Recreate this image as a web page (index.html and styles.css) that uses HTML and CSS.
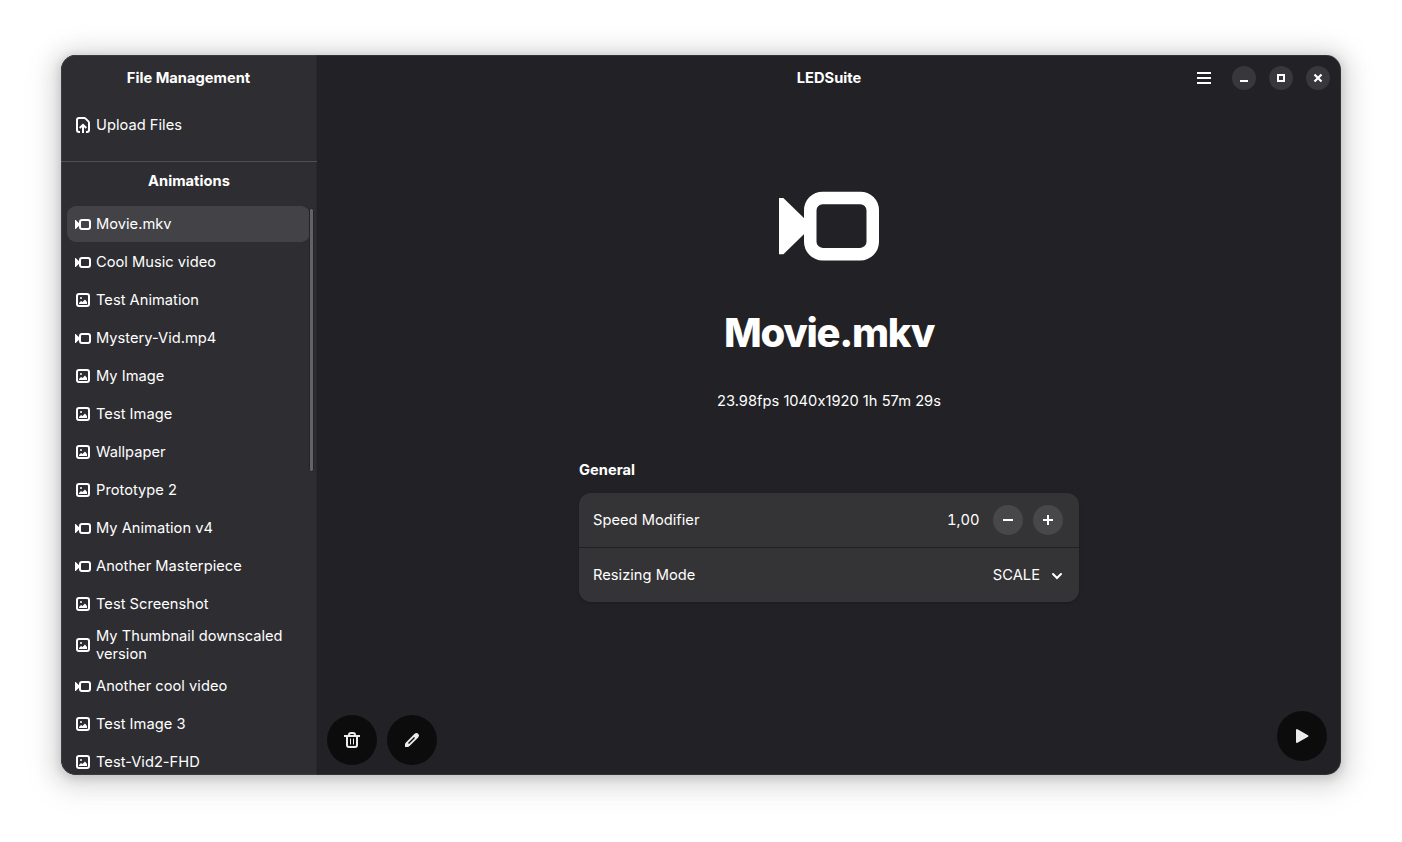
FILE: index.html
```html
<!DOCTYPE html>
<html lang="en">
<head>
<meta charset="utf-8">
<title>LEDSuite</title>
<link rel="stylesheet" href="styles.css">
</head>
<body>
<svg class="defs" width="0" height="0">
  <symbol id="video" viewBox="0 0 16 16"><path fill="currentColor" d="M0 3.5h.7L4.6 7.3v1.4L.7 12.5H0z"/><rect x="5" y="3.5" width="10" height="9" rx="2" fill="none" stroke="currentColor" stroke-width="2"/></symbol>
  <symbol id="video-small" viewBox="0 0 16 16"><path fill="currentColor" d="M0 4h.7L4.600 7.800v1.400L.7 13H0z"/><rect x="5" y="4" width="10" height="9" rx="2" fill="none" stroke="currentColor" stroke-width="2"/></symbol>
  <symbol id="image" viewBox="0 0 16 16"><rect x="2" y="2" width="12" height="12" rx="2" fill="none" stroke="currentColor" stroke-width="2"/><circle cx="6" cy="6" r="1" fill="currentColor"/><path fill="currentColor" d="M4 12v-1l2-2 1.500 1L10 7.500l2 2.500v2z"/></symbol>
</svg>
<div class="window">
  <aside class="sidebar">
    <h2 class="title">File Management</h2>
    <div class="row upload"><svg class="icon" viewBox="0 0 16 16" fill="none" stroke="currentColor" stroke-width="2"><path d="M5 15H4a2 2 0 0 1-2-2V3a2 2 0 0 1 2-2h5.200a2 2 0 0 1 1.400.6l2.800 2.800a2 2 0 0 1 .6 1.400V13a2 2 0 0 1-2 2h-1"/><path d="M8 16V8.500M4.700 11 8 7.800l3.300 3.200"/></svg><span>Upload Files</span></div>
    <h2 class="title animations">Animations</h2>
    <div class="list">
      <div class="row selected"><svg class="icon"><use href="#video-small"/></svg><span>Movie.mkv</span></div>
      <div class="row"><svg class="icon"><use href="#video-small"/></svg><span>Cool Music video</span></div>
      <div class="row"><svg class="icon"><use href="#image"/></svg><span>Test Animation</span></div>
      <div class="row"><svg class="icon"><use href="#video-small"/></svg><span>Mystery-Vid.mp4</span></div>
      <div class="row"><svg class="icon"><use href="#image"/></svg><span>My Image</span></div>
      <div class="row"><svg class="icon"><use href="#image"/></svg><span>Test Image</span></div>
      <div class="row"><svg class="icon"><use href="#image"/></svg><span>Wallpaper</span></div>
      <div class="row"><svg class="icon"><use href="#image"/></svg><span>Prototype 2</span></div>
      <div class="row"><svg class="icon"><use href="#video-small"/></svg><span>My Animation v4</span></div>
      <div class="row"><svg class="icon"><use href="#video-small"/></svg><span>Another Masterpiece</span></div>
      <div class="row"><svg class="icon"><use href="#image"/></svg><span>Test Screenshot</span></div>
      <div class="row"><svg class="icon"><use href="#image"/></svg><span>My Thumbnail downscaled version</span></div>
      <div class="row"><svg class="icon"><use href="#video-small"/></svg><span>Another cool video</span></div>
      <div class="row"><svg class="icon"><use href="#image"/></svg><span>Test Image 3</span></div>
      <div class="row"><svg class="icon"><use href="#image"/></svg><span>Test-Vid2-FHD</span></div>
      <div class="scrollbar"></div>
    </div>
  </aside>
  <main class="content">
    <header class="header">
      <h1 class="title">LEDSuite</h1>
      <div class="controls">
        <svg class="icon menu" viewBox="0 0 16 16" fill="currentColor"><path d="M1 2h14v2H1zM1 7h14v2H1zM1 12h14v2H1z"/></svg>
        <button class="control"><svg class="icon" viewBox="0 0 16 16" fill="currentColor"><path d="M4 10h8v2H4z"/></svg></button>
        <button class="control"><svg class="icon" viewBox="0 0 16 16"><path d="M5 5h6v6H5z" fill="none" stroke="currentColor" stroke-width="2"/></svg></button>
        <button class="control"><svg class="icon" viewBox="0 0 16 16"><path d="m4.500 4.500 7 7m0-7-7 7" fill="none" stroke="currentColor" stroke-width="2.200"/></svg></button>
      </div>
    </header>
    <section class="details">
      <svg class="hero"><use href="#video"/></svg>
      <div class="name">Movie.mkv</div>
      <div class="meta">23.98fps 1040x1920 1h 57m 29s</div>
      <div class="group">
        <h3 class="group-title">General</h3>
        <div class="card">
          <div class="setting"><span>Speed Modifier</span><span class="value">1,00</span>
            <button class="step"><svg class="icon" viewBox="0 0 16 16" fill="currentColor"><path d="M3 7h10v2H3z"/></svg></button>
            <button class="step"><svg class="icon" viewBox="0 0 16 16" fill="currentColor"><path d="M7 3h2v4h4v2H9v4H7V9H3V7h4z"/></svg></button>
          </div>
          <div class="setting"><span>Resizing Mode</span><span class="mode">SCALE</span><svg class="icon arrow" viewBox="0 0 16 16"><path d="m4 7 4 4 4-4" fill="none" stroke="currentColor" stroke-width="2" stroke-linecap="round"/></svg></div>
        </div>
      </div>
    </section>
    <footer class="actions">
      <button class="round"><svg class="icon" viewBox="0 0 16 16" fill="none" stroke="currentColor"><path stroke-width="2" d="M0 4h16M5 4V3a2 2 0 0 1 2-2h2a2 2 0 0 1 2 2v1M3 4v9a2 2 0 0 0 2 2h6a2 2 0 0 0 2-2V4"/><path d="M6.500 6.500v6M9.500 6.500v6"/></svg></button>
      <button class="round"><svg class="icon" viewBox="0 0 16 16"><path fill="currentColor" fill-rule="evenodd" d="M10.600 1.800a2.500 2.500 0 0 1 3.600 3.600L5.300 14.300a2.400 2.400 0 0 1-1.700.7H1v-2.600a2.400 2.400 0 0 1 .7-1.700zM10 5 4 11l1 1 6-6z"/></svg></button>
      <button class="round play"><svg class="icon" viewBox="0 0 16 16"><path d="M3 2v12l10.500-6z" fill="currentColor" stroke="currentColor" stroke-width="2" stroke-linejoin="round"/></svg></button>
    </footer>
  </main>
</div>
</body>
</html>
```
FILE: styles.css
```css
* { box-sizing: border-box; }
body { margin: 0; padding: 55px 61px; background: #fff; font: 14.667px/18px Inter, "Noto Sans", sans-serif; font-feature-settings: "calt" 0; letter-spacing: .02px; color: #fff; overflow: hidden; }
h1, h2, h3 { margin: 0; font-size: inherit; font-weight: 700; }
button { padding: 0; border: 0; color: inherit; display: flex; align-items: center; justify-content: center; border-radius: 50%; }
.defs { position: absolute; }
.icon { display: block; width: 16px; height: 16px; flex: none; }
.window { position: relative; display: flex; width: 1280px; height: 720px; border-radius: 15px; overflow: hidden; background: #222226; box-shadow: 0 2px 8px 2px rgba(0,0,0,.13), 0 3px 20px 10px rgba(0,0,0,.09), 0 6px 32px 16px rgba(0,0,0,.04); }
.window::after { content: ""; position: absolute; inset: 0; border-radius: 15px; box-shadow: inset 0 0 0 1px rgba(255,255,255,.07); pointer-events: none; }
.sidebar { width: 256px; height: 720px; background: #2e2e32; border-right: 1px solid #28282c; display: flex; flex-direction: column; flex: none; }
.title { height: 46px; line-height: 46px; text-align: center; }
.row { display: flex; align-items: center; gap: 5px; min-height: 36px; padding: 3px 8px; border-radius: 9px; flex: none; }
.upload { margin: 6px 6px 18px; }
.animations { border-top: 1px solid #505053; height: 39px; line-height: 38px; margin-right: -1px; }
.list { position: relative; display: flex; flex-direction: column; gap: 2px; padding: 6px 6px 0; flex: 1; overflow: hidden; }
.selected { background: #434347; }
.scrollbar { position: absolute; right: 2px; top: 8px; width: 5px; height: 264px; border: 1px solid #242428; border-radius: 3px; background: #636367; }
.content { flex: 1; display: flex; flex-direction: column; min-width: 0; }
.header { display: grid; height: 46px; align-items: center; }
.header > * { grid-area: 1 / 1; }
.controls { justify-self: end; display: flex; align-items: center; gap: 13px; margin-right: 11px; }
.menu { margin-right: 7px; }
.control { width: 24px; height: 24px; background: #38383c; }
.details { flex: 1; display: flex; flex-direction: column; align-items: center; padding-top: 75px; }
.hero { width: 100px; height: 100px; }
.name { margin-top: 33px; font-size: 40px; line-height: 48px; font-weight: 800; letter-spacing: -1.3px; }
.meta { margin-top: 35px; }
.group { width: 500px; margin-top: 51px; }
.card { margin-top: 14px; background: #343436; border-radius: 12px; box-shadow: 0 1px 3px rgba(0,0,0,.2); }
.setting { display: flex; align-items: center; height: 54px; padding: 0 16px 0 14px; }
.setting + .setting { height: 55px; border-top: 1px solid #212124; }
.value { margin-left: auto; margin-right: 13.500px; font-feature-settings: "tnum"; }
.step { width: 30px; height: 30px; background: #48484a; }
.step + .step { margin-left: 10px; }
.mode { margin-left: auto; margin-right: 9px; }
.arrow { margin-right: -2px; }
.actions { display: flex; gap: 10px; padding: 0 14px 10px 10px; }
.round { width: 50px; height: 50px; background: #0c0c0d; color: #ececec; }
.play { margin: -4px 0 4px auto; }
```
